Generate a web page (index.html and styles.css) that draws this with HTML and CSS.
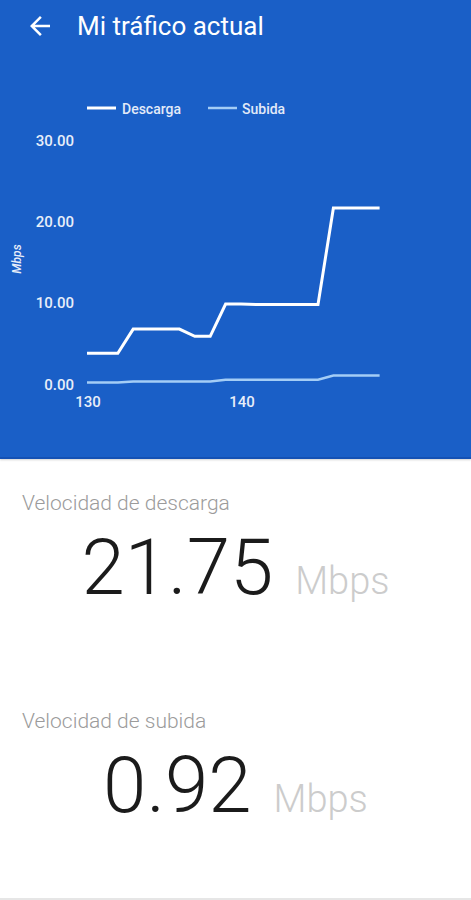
FILE: index.html
```html
<!DOCTYPE html>
<html lang="es">
<head>
    <meta charset="UTF-8">
    <meta name="viewport" content="width=device-width, initial-scale=1.0">
    <title>Mi tráfico actual</title>
    <link rel="stylesheet" href="styles.css">
</head>
<body>

    <!--Parte azul: barra + grafico-->
    <div class="top">
        <header class="app-bar">
            <svg class="back" viewBox="0 0 24 24" width="30" height="30">
                <path d="M20 11H7.83l5.59-5.59L12 4l-8 8 8 8 1.41-1.41L7.83 13H20v-2z" fill="#fff"/>
            </svg>
            <h1>Mi tráfico actual</h1>
        </header>

        <!--Grafico (las lineas se generan via js)-->
        <svg class="chart" viewBox="0 56 471 401" width="471" height="401">
            <!--leyenda-->
            <line x1="87" y1="108" x2="116" y2="108" class="ln-down"/>
            <text x="122" y="114" class="legend">Descarga</text>
            <line x1="208" y1="108" x2="237" y2="108" class="ln-up"/>
            <text x="242" y="114" class="legend">Subida</text>

            <!--eje Y-->
            <text x="74" y="146" class="axis" text-anchor="end">30.00</text>
            <text x="74" y="227" class="axis" text-anchor="end">20.00</text>
            <text x="74" y="308" class="axis" text-anchor="end">10.00</text>
            <text x="74" y="390" class="axis" text-anchor="end">0.00</text>
            <text x="21" y="259" class="axis-title" text-anchor="middle" transform="rotate(-90 21 259)">Mbps</text>

            <!--eje X-->
            <text x="88" y="407" class="axis" text-anchor="middle">130</text>
            <text x="242" y="407" class="axis" text-anchor="middle">140</text>

            <polyline id="lineaSubida" class="ln-up" fill="none"/>
            <polyline id="lineaDescarga" class="ln-down" fill="none"/>
        </svg>
    </div>

    <!--Velocidades-->
    <section class="metric">
        <p class="metric-label">Velocidad de descarga</p>
        <div class="metric-value">
            <span class="num">21.75</span>
            <span class="unit">Mbps</span>
        </div>
    </section>

    <section class="metric metric-up">
        <p class="metric-label">Velocidad de subida</p>
        <div class="metric-value">
            <span class="num">0.92</span>
            <span class="unit">Mbps</span>
        </div>
    </section>

    <div class="bottom-line"></div>

    <script>
        //valores en Mbps (muestras 130 a 149)
        const descarga = [3.7,3.7,3.7,6.7,6.7,6.7,6.7,5.8,5.8,9.8,9.8,9.75,9.75,9.75,9.75,9.75,21.75,21.75,21.75,21.75];
        const subida = [0.05,0.05,0.05,0.2,0.2,0.2,0.2,0.2,0.2,0.4,0.4,0.4,0.4,0.4,0.4,0.4,0.92,0.92,0.92,0.92];

        //convierte los valores a coordenadas del svg
        function puntos(valores) {
            return valores.map((v, i) => {
                const x = 87 + i * 15.4;
                const y = 383 - v * 8.05;
                return x.toFixed(1) + ',' + y.toFixed(1);
            }).join(' ');
        }

        document.getElementById('lineaDescarga').setAttribute('points', puntos(descarga));
        document.getElementById('lineaSubida').setAttribute('points', puntos(subida));
    </script>
</body>
</html>
```

FILE: styles.css
```css
/* ---------- BASE ---------- */
* { box-sizing:border-box; }

body {
    margin:0;
    height:100vh;
    display:flex;
    flex-direction:column;
    background:#fff;
    font-family:Roboto, "Noto Sans", sans-serif;
}

/* ---------- PARTE AZUL ---------- */
.top {
    background:#1a5fc7;
    border-bottom:2px solid #1451b4;
    box-shadow:0 1px 2px rgba(0,0,0,.18);
}

.app-bar {
    height:56px;
    display:flex;
    align-items:center;
    padding:0 0 4px 25px;
}

.back { display:block; flex-shrink:0; }

.app-bar h1 {
    margin:0 0 0 22px;
    font-size:26px;
    font-weight:400;
    color:#fff;
}

/* ---------- GRAFICO ---------- */
.chart { display:block; }

.ln-down {
    stroke:#fff;
    stroke-width:3;
}

.ln-up {
    stroke:#a4cdf6;
    stroke-width:2.5;
}

.legend {
    font-size:14px;
    font-weight:500;
    fill:#e2eaf8;
}

.axis {
    font-size:15px;
    font-weight:500;
    fill:#e8eef9;
}

.axis-title {
    font-size:12px;
    font-weight:500;
    font-style:italic;
    fill:#e8eef9;
}

/* ---------- VELOCIDADES ---------- */
.metric { padding:32px 0 0 22px; }

.metric-up { padding-top:88px; }

.metric-label {
    margin:0;
    font-size:21px;
    line-height:24px;
    font-weight:300;
    color:#9b9b9b;
}

.metric-value {
    margin-top:13px;
    padding-right:22px;
    display:flex;
    justify-content:center;
    align-items:baseline;
    gap:22px;
    line-height:80px;
}

.num {
    font-size:78px;
    font-weight:300;
    color:#1b1b1b;
}

.unit {
    font-size:38px;
    font-weight:300;
    color:#cccccc;
}

.bottom-line {
    margin-top:auto;
    height:2px;
    background:#e6e6e6;
}
```
